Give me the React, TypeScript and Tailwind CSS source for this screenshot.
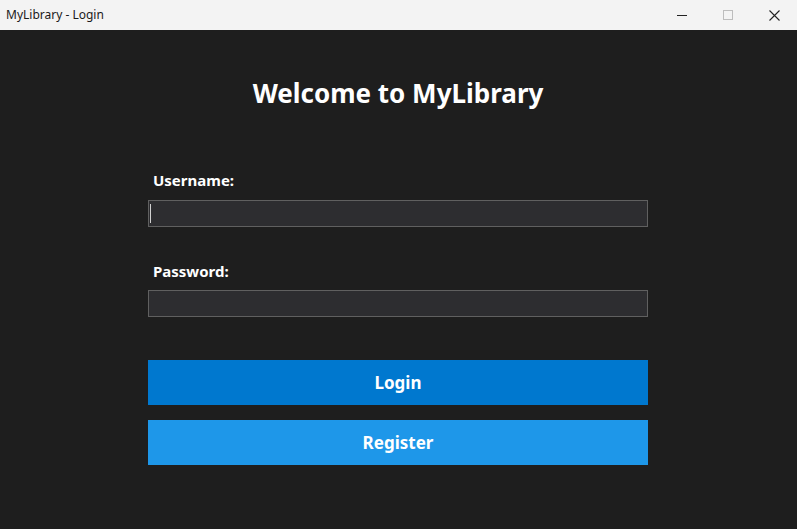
import React from "react";

function TitleBar() {
  return (
    <div className="flex h-[30px] items-center justify-between bg-[#f3f3f3] text-[12px] text-[#1a1a1a]">
      <span className="pl-[6px]">MyLibrary - Login</span>
      <div className="flex h-full">
        <div className="flex w-[46px] items-center justify-center">
          <svg width="10" height="10" viewBox="0 0 10 10">
            <path d="M0 5.5h10" stroke="#222" strokeWidth="1" />
          </svg>
        </div>
        <div className="flex w-[46px] items-center justify-center">
          <svg width="10" height="10" viewBox="0 0 10 10">
            <rect x="0.5" y="0.5" width="9" height="9" fill="none" stroke="#bdbdbd" strokeWidth="1" />
          </svg>
        </div>
        <div className="flex w-[46px] items-center justify-center">
          <svg width="11" height="11" viewBox="0 0 11 11">
            <path d="M0.5 0.5l10 10M10.5 0.5l-10 10" stroke="#222" strokeWidth="1.1" />
          </svg>
        </div>
      </div>
    </div>
  );
}

export default function App() {
  return (
    <div
      className="flex h-[529px] w-[797px] flex-col overflow-hidden bg-[#1e1e1e]"
      style={{ fontFamily: '"Noto Sans", "Open Sans", sans-serif' }}
    >
      <TitleBar />
      <div className="ml-[148px] flex w-[500px] flex-col pt-[46px]">
        <h1 className="text-center text-[26px] font-bold leading-[35px] text-white">
          Welcome to MyLibrary
        </h1>

        <label className="mt-[59px] pl-[5px] text-[15px] font-bold leading-[20px] text-white">
          Username:
        </label>
        <div className="mt-[10px] flex h-[27px] items-center border border-[#606060] bg-[#2d2d30] pl-[1px]">
          <div className="h-[19px] w-px bg-[#d0d0d0]" />
        </div>

        <label className="mt-[34px] pl-[5px] text-[15px] font-bold leading-[20px] text-white">
          Password:
        </label>
        <div className="mt-[9px] h-[27px] border border-[#606060] bg-[#2d2d30]" />

        <button className="mt-[43px] h-[45px] bg-[#0078cf] text-[17px] font-bold text-white">
          Login
        </button>
        <button className="mt-[15px] h-[45px] bg-[#1e97e9] text-[17px] font-bold text-white">
          Register
        </button>
      </div>
    </div>
  );
}
